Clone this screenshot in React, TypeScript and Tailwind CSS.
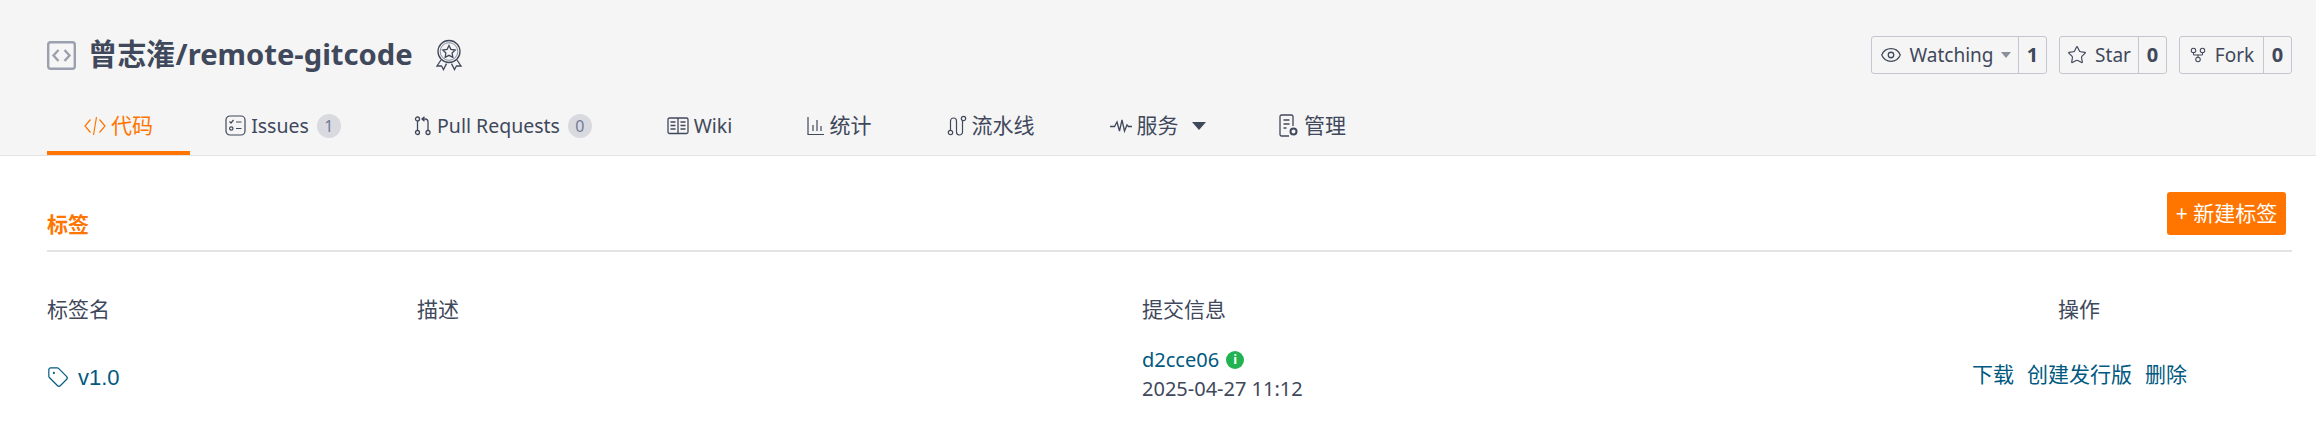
import React from "react";
import { Eye, Star, GitFork, Tag } from "lucide-react";

const FONT = { sans: "font-['Noto_Sans','Noto_Sans_CJK_SC',sans-serif]" };

const CodeIcon = () => (
  <svg viewBox="0 0 22 20" className="h-[20px] w-[22px]" fill="none" stroke="currentColor" strokeWidth="1.2">
    <path d="M6.500 3.500 1 10l5.500 6.500M15.500 3.500 21 10l-5.500 6.500M12.500 1 9.500 19" />
  </svg>
);

const IssuesIcon = () => (
  <svg viewBox="0 0 21 21" className="h-[21px] w-[21px]" fill="none" stroke="currentColor" strokeWidth="1.2">
    <rect x="1" y="1" width="19" height="19" rx="4" />
    <path d="m4.500 6.500 1.500 1.500 2.500-3M11 7h5.500M11 13.500h5.500" />
    <circle cx="6.300" cy="13.500" r="1.700" />
  </svg>
);

const PullIcon = () => (
  <svg viewBox="0 0 18 20" className="h-[20px] w-[18px]" fill="none" stroke="currentColor" strokeWidth="1.3">
    <circle cx="3.500" cy="3" r="2" />
    <circle cx="3.500" cy="16.500" r="2" />
    <circle cx="14" cy="16.500" r="2" />
    <path d="M3.500 5v9.500M14 14.500V6a3 3 0 0 0-3-3H8M10.500 .8 8 3l2.500 2.200" />
  </svg>
);

const WikiIcon = () => (
  <svg viewBox="0 0 22 18" className="h-[18px] w-[22px]" fill="none" stroke="currentColor" strokeWidth="1.3">
    <rect x="1" y="1" width="20" height="15.500" rx="1.500" />
    <path d="M11 1v15.500M3.500 5H8.500M3.500 8.500H8.500M3.500 12H8.500M13.500 5H18.500M13.500 8.500H18.500M13.500 12H18.500" />
  </svg>
);

const StatsIcon = () => (
  <svg viewBox="0 0 18 20" className="h-[20px] w-[18px]" fill="none" stroke="currentColor" strokeWidth="1.2">
    <path d="M1 1v17.500h16M6 15V9M10 15V4M14 15V10" />
  </svg>
);

const PipelineIcon = () => (
  <svg viewBox="0 0 20 22" className="h-[22px] w-[20px]" fill="none" stroke="currentColor" strokeWidth="1.2">
    <circle cx="3.500" cy="17.500" r="2.200" />
    <circle cx="16.500" cy="3.500" r="2.200" />
    <path d="M3.500 15.300V6a3 3 0 0 1 6 0v11a3 3 0 0 0 6 0V5.700" />
  </svg>
);

const PulseIcon = () => (
  <svg viewBox="0 0 22 16" className="h-[16px] w-[22px]" fill="none" stroke="currentColor" strokeWidth="1.300">
    <path d="M0 8.500h4.500L7 4l2.500 9 2.500-11 2.500 11L17 7l1.500 1.500H22" />
  </svg>
);

const AdminIcon = () => (
  <svg viewBox="0 0 20 24" className="h-[24px] w-[20px]" fill="none" stroke="currentColor" strokeWidth="1.300">
    <path d="M10 22H2.500A1.500 1.500 0 0 1 1 20.500v-18A1.500 1.500 0 0 1 2.500 1h10A1.500 1.500 0 0 1 14 2.500V12" />
    <path d="M4.500 6h6M4.500 10h6M4.500 14h3" />
    <circle cx="14.500" cy="17.500" r="3" strokeWidth="2" />
  </svg>
);

const RepoIcon = () => (
  <svg viewBox="0 0 29 29" className="h-[29px] w-[29px] text-[#9aa0ae]" fill="none" stroke="currentColor">
    <rect x="1.200" y="1.200" width="26.600" height="26.600" rx="2.500" strokeWidth="2.400" />
    <path d="m11.500 9-5 5.500 5 5.500M17.500 9l5 5.500-5 5.500" strokeWidth="2.400" />
  </svg>
);

const BadgeIcon = () => (
  <svg viewBox="0 0 28 32" className="h-[32px] w-[28px] text-[#40485b]" fill="none" stroke="currentColor" strokeWidth="1.300">
    <circle cx="14" cy="12.500" r="11" />
    <circle cx="14" cy="12.500" r="8.800" strokeWidth="0.600" />
    <path d="m14 6.500 1.900 3.900 4.300.6-3.100 3 .7 4.300-3.800-2-3.800 2 .7-4.300-3.100-3 4.300-.6Z" />
    <path d="M6 21 2 27l4.500-.2 2 3.800 3-6M22 21l4 6-4.500-.2-2 3.800-3-6" />
  </svg>
);

type TabItem = { icon: React.ReactNode; label: string; count?: string; caret?: boolean; active?: boolean; width: string };

const tabs: TabItem[] = [
  { icon: <CodeIcon />, label: "代码", active: true, width: "w-[143px]" },
  { icon: <IssuesIcon />, label: "Issues", count: "1", width: "w-[186px]" },
  { icon: <PullIcon />, label: "Pull Requests", count: "0", width: "w-[254px]" },
  { icon: <WikiIcon />, label: "Wiki", width: "w-[139px]" },
  { icon: <StatsIcon />, label: "统计", width: "w-[140px]" },
  { icon: <PipelineIcon />, label: "流水线", width: "w-[163px]" },
  { icon: <PulseIcon />, label: "服务", caret: true, width: "w-[171px]" },
  { icon: <AdminIcon />, label: "管理", width: "w-[139px]" },
];

const isLatin = (s: string) => /^[A-Za-z ]+$/.test(s);

const Counter = ({ icon, label, count, caret, width }: { icon: React.ReactNode; label: string; count: string; caret?: boolean; width: string }) => (
  <div className={`flex h-[38px] items-center rounded-[3px] border border-[#c4c6cf] text-[19px] text-[#40485b] ${width}`}>
    <div className="flex min-w-0 flex-1 items-center justify-center gap-[8px] whitespace-nowrap">
      {icon}
      <span>{label}</span>
      {caret && <span className="ml-[-1px] h-0 w-0 border-x-[5.5px] border-t-[6px] border-x-transparent border-t-[#8a8f9c]" />}
    </div>
    <div className="flex h-[36px] w-[28px] items-center justify-center border-l border-[#c4c6cf] text-[20px] font-bold">{count}</div>
  </div>
);

export default function App() {
  return (
    <div className={`h-[438px] w-[2316px] overflow-hidden bg-white ${FONT.sans} text-[20px] text-[#40485b]`}>
      <header className="h-[156px] border-b border-[#e3e3e3] bg-[#f5f5f5] pl-[47px] pr-[24px]">
        <div className="flex h-[100px] items-center justify-between pt-[10px]">
          <div className="flex items-center">
            <RepoIcon />
            <h1 className="ml-[12px] text-[29.2px] font-bold leading-none">曾志潅/remote-gitcode</h1>
            <span className="ml-[22px]"><BadgeIcon /></span>
          </div>
          <div className="flex gap-[12px]">
            <Counter icon={<Eye size={22} strokeWidth={1.4} />} label="Watching" count="1" caret width="w-[176px]" />
            <Counter icon={<Star size={20} strokeWidth={1.4} />} label="Star" count="0" width="w-[108px]" />
            <Counter icon={<GitFork size={18} strokeWidth={1.4} />} label="Fork" count="0" width="w-[113px]" />
          </div>
        </div>
        <nav className="flex h-[55px] text-[#40485b]">
          {tabs.map((t) => (
            <div
              key={t.label}
              className={`flex h-[55px] items-center justify-center gap-[5px] whitespace-nowrap border-b-[4px] ${t.width} ${
                t.active ? "border-[#ff7500] text-[#ff7500]" : "border-transparent"
              }`}
            >
              {t.icon}
              <span className={isLatin(t.label) ? "text-[19.5px]" : "text-[21px]"}>{t.label}</span>
              {t.count && (
                <span className="ml-[3px] flex h-[24px] w-[24px] items-center justify-center rounded-full bg-[#d8dae0] text-[16px] text-[#727c96]">
                  {t.count}
                </span>
              )}
              {t.caret && <span className="ml-[8px] h-0 w-0 border-x-[7px] border-t-[8px] border-x-transparent border-t-[#40485b]" />}
            </div>
          ))}
        </nav>
      </header>

      <main className="pl-[47px] pr-[24px]">
        <div className="flex h-[96px] items-start justify-between border-b-2 border-[#e3e3e3] pr-[6px] pt-[36px]">
          <h2 className="mt-[17px] text-[21px] font-bold leading-[30px] text-[#ff7500]">标签</h2>
          <button className="flex h-[43px] w-[119px] items-center justify-center rounded-[3px] bg-[#ff7500] text-[21px] text-white">
            + 新建标签
          </button>
        </div>
        <div className="grid grid-cols-[370px_725px_1fr] pt-[41px] text-[21px]">
          <div className="h-[33px] leading-[33px]">标签名</div>
          <div className="h-[33px] leading-[33px]">描述</div>
          <div className="flex h-[33px] justify-between leading-[33px]">
            <span>提交信息</span>
            <span className="mr-[192px]">操作</span>
          </div>
          <div className="mt-[25px] flex items-center gap-[9px] text-[#005980]">
            <Tag size={22} strokeWidth={1.3} />
            <span className="font-['Liberation_Sans',sans-serif] text-[22px]">v1.0</span>
          </div>
          <div />
          <div className="mt-[19px] flex justify-between">
            <div className="text-[20px] leading-[29px]">
              <div className="flex items-center gap-[7px] text-[#005980]">
                d2cce06
                <span className="flex h-[18px] w-[18px] items-center justify-center rounded-full bg-[#21b351] text-[13px] font-bold leading-none text-white">i</span>
              </div>
              <div>2025-04-27 11:12</div>
            </div>
            <div className="mr-[105px] mt-[15px] flex h-[29px] items-center gap-[13px] text-[#005980]">
              <span>下载</span>
              <span>创建发行版</span>
              <span>删除</span>
            </div>
          </div>
        </div>
      </main>
    </div>
  );
}
